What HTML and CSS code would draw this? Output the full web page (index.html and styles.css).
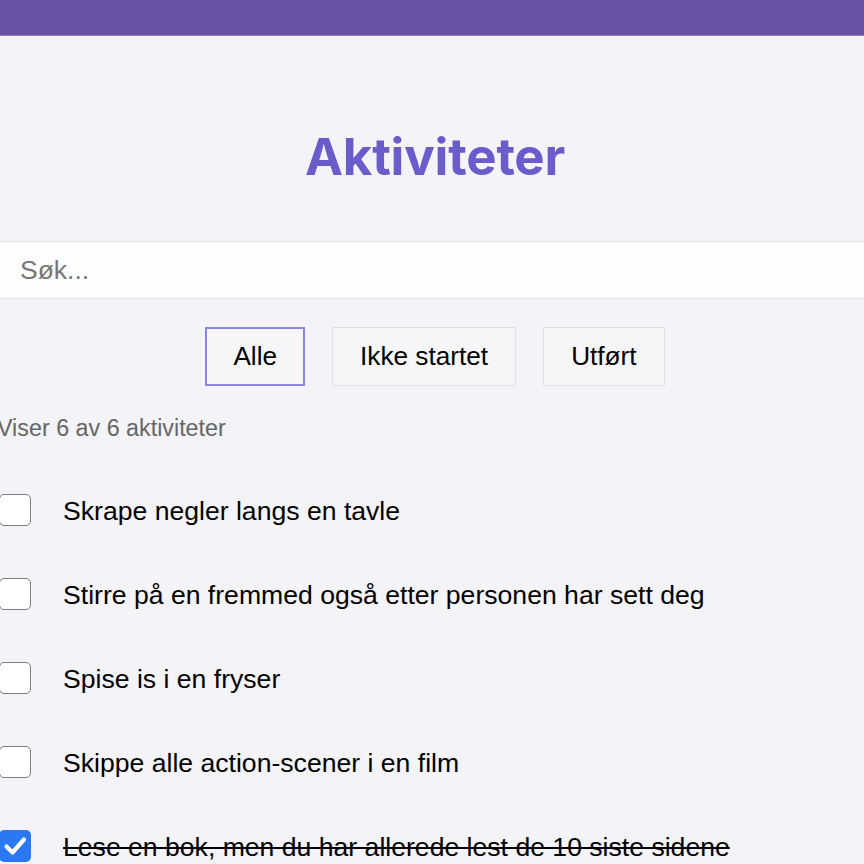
FILE: index.html
```html
<!DOCTYPE html>
<html lang="no">
<head>
<meta charset="utf-8">
<title>Aktiviteter</title>
<link rel="stylesheet" href="styles.css">
</head>
<body>
<header class="topbar"></header>
<main class="app">
  <h1 class="title">Aktiviteter</h1>
  <input class="search" type="text" placeholder="Søk...">
  <div class="filters">
    <button class="filter active">Alle</button>
    <button class="filter">Ikke startet</button>
    <button class="filter">Utført</button>
  </div>
  <p class="count">Viser 6 av 6 aktiviteter</p>
  <ul class="list">
    <li class="item"><span class="box"></span><span class="label">Skrape negler langs en tavle</span></li>
    <li class="item"><span class="box"></span><span class="label">Stirre på en fremmed også etter personen har sett deg</span></li>
    <li class="item"><span class="box"></span><span class="label">Spise is i en fryser</span></li>
    <li class="item"><span class="box"></span><span class="label">Skippe alle action-scener i en film</span></li>
    <li class="item done"><span class="box"><svg viewBox="0 0 32 32" width="32" height="32"><path d="M7.5 16.5l6 6L25 9.5" fill="none" stroke="#fff" stroke-width="4.2" stroke-linecap="round" stroke-linejoin="round"/></svg></span><span class="label">Lese en bok, men du har allerede lest de 10 siste sidene</span></li>
    <li class="item"><span class="box"></span><span class="label">Gå i motsatt retning i rulletrappen</span></li>
  </ul>
</main>
</body>
</html>
```

FILE: styles.css
```css
html, body {
  margin: 0;
  padding: 0;
  background: #f4f3f7;
  overflow: hidden;
}
body {
  font-family: "Liberation Sans", Arial, sans-serif;
  color: #000;
}
.topbar {
  height: 35px;
  background: #6a52a7;
  border-bottom: 1px solid #8f80cf;
}
.app {
  width: 876px;
  margin-left: -3px;
  display: flex;
  flex-direction: column;
}
.title {
  margin: 91px 0 0;
  text-align: center;
  font-family: Inter, "Noto Sans", sans-serif;
  font-weight: 700;
  font-size: 51px;
  line-height: 60px;
  color: #6a5ccb;
  letter-spacing: -0.2px;
}
.search {
  margin-top: 54px;
  height: 58px;
  box-sizing: border-box;
  border: 1px solid #e2e1e8;
  background: #fdfdfe;
  padding: 0 22px;
  font-family: "Liberation Sans", Arial, sans-serif;
  font-size: 26.5px;
  color: #111;
  outline: none;
}
.search::placeholder {
  color: #767676;
}
.filters {
  margin-top: 28px;
  display: flex;
  justify-content: center;
  gap: 27px;
}
.filter {
  height: 59px;
  box-sizing: border-box;
  padding: 0 27px;
  border: 1px solid #e0dfe5;
  background: #f6f6f8;
  font-family: "Liberation Sans", Arial, sans-serif;
  font-size: 26.2px;
  color: #000;
}
.filter.active {
  border: 2px solid #8b86e6;
  padding: 0 26px;
}
.count {
  margin: 29px 0 0;
  font-size: 23.3px;
  line-height: 27px;
  color: #666;
}
.list {
  list-style: none;
  margin: 26px 0 0;
  padding: 0;
}
.item {
  height: 84px;
  display: flex;
  align-items: center;
  gap: 32px;
}
.box {
  margin-left: 2px;
  width: 32px;
  height: 32px;
  box-sizing: border-box;
  border: 1.5px solid #7d7d80;
  border-radius: 5px;
  background: #fff;
  flex: none;
  display: flex;
}
.done .box {
  border: none;
  background: #2a78f4;
}
.label {
  font-size: 26.6px;
  line-height: 32px;
  padding-top: 2px;
}
.done .label {
  text-decoration: line-through;
  text-decoration-thickness: 2px;
}
```
